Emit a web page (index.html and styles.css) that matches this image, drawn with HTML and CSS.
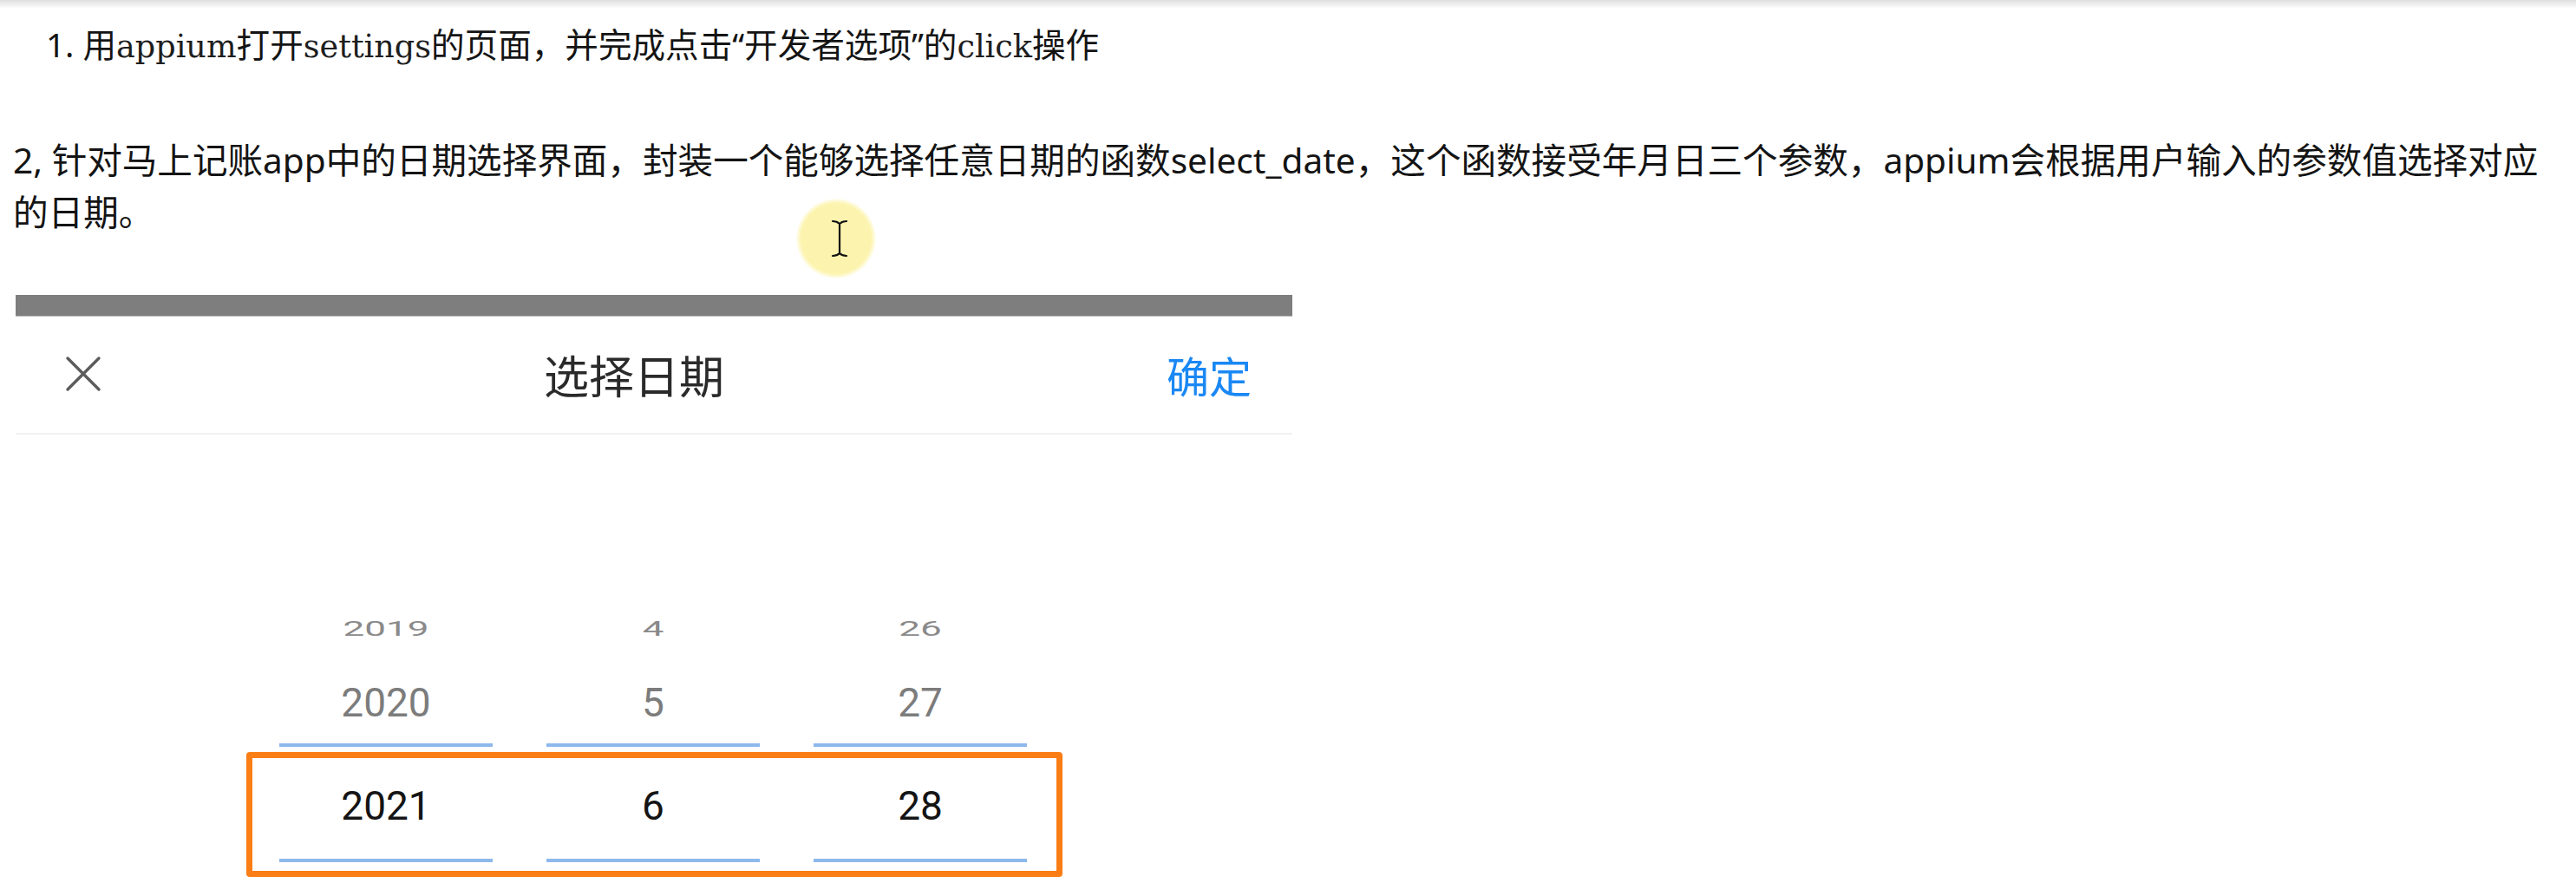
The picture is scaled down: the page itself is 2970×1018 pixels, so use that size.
FILE: index.html
```html
<!DOCTYPE html>
<html lang="zh-CN">
<head>
<meta charset="utf-8">
<title>select_date</title>
<link rel="stylesheet" href="styles.css">
</head>
<body>
<div class="shade"></div>
<main class="doc">
  <p class="q1">1. 用<span class="lat">appium</span>打开<span class="lat">settings</span>的页面，并完成点击“开发者选项”的<span class="lat">click</span>操作</p>
  <p class="q2">2, 针对马上记账app中的日期选择界面，封装一个能够选择任意日期的函数select_date，这个函数接受年月日三个参数，appium会根据用户输入的参数值选择对应的日期。</p>
  <section class="shot">
    <div class="statusbar"></div>
    <div class="head">
      <span class="close"><svg viewBox="0 0 42 42" width="42" height="42"><path d="M3 3 L39 39 M39 3 L3 39" stroke="#5c5c5c" stroke-width="3.4" fill="none" stroke-linecap="round"/></svg></span>
      <span class="title">选择日期</span>
      <span class="ok">确定</span>
    </div>
    <div class="wheel">
      <div class="col">
        <div class="cell far">2019</div>
        <div class="cell near">2020</div>
        <div class="cell sel">2021</div>
      </div>
      <div class="col">
        <div class="cell far">4</div>
        <div class="cell near">5</div>
        <div class="cell sel">6</div>
      </div>
      <div class="col">
        <div class="cell far">26</div>
        <div class="cell near">27</div>
        <div class="cell sel">28</div>
      </div>
      <div class="mark"></div>
    </div>
  </section>
  <div class="cursor"><svg viewBox="0 0 22 44" width="22" height="44"><path d="M3 2 Q8 2 11 5 Q14 2 19 2 M11 5 V39 M3 42 Q8 42 11 39 Q14 42 19 42" stroke="#111" stroke-width="2.2" fill="none" stroke-linecap="round"/></svg></div>
</main>
</body>
</html>
```

FILE: styles.css
```css
* { box-sizing: border-box; margin: 0; padding: 0; }
html, body { background: #fff; }
body {
  font-family: "Noto Sans", "Noto Sans CJK SC", sans-serif;
  color: #222;
  width: 2970px;
  height: 1018px;
  overflow: hidden;
}
.shade { height: 10px; background: linear-gradient(#dedede, #ffffff); }
.doc { position: relative; }
.q1 {
  margin-top: 11px;
  padding-left: 53px;
  font-size: 38.6px;
  line-height: 60px;
  color: #141414;
}
.q1 .lat { font-family: "DejaVu Serif", serif; font-size: 36.6px; color: #1e1e1e; }
.q2 {
  margin-top: 71px;
  padding-left: 15px;
  width: 2940px;
  font-size: 40.6px;
  line-height: 60px;
  color: #141414;
}
.shot {
  margin-top: 65px;
  margin-left: 18px;
  width: 1472px;
}
.statusbar {
  height: 25px;
  background: #7e7e7e;
  border-bottom: 1px solid #b8b8b8;
}
.head {
  display: flex;
  align-items: center;
  height: 136px;
  padding-bottom: 2px;
  border-bottom: 2px solid #f1f1f1;
}
.close { padding-left: 57px; display: flex; }
.title {
  flex: 1;
  text-align: center;
  font-size: 52px;
  color: #2a2a2a;
}
.ok {
  padding-right: 47px;
  font-size: 49px;
  color: #1a88f4;
}
.wheel {
  position: relative;
  display: grid;
  grid-template-columns: repeat(3, 246px);
  column-gap: 62px;
  padding-left: 304px;
  padding-top: 204px;
  height: 520px;
}
.col { display: flex; flex-direction: column; }
.cell {
  text-align: center;
  font-family: Roboto, "Noto Sans", sans-serif;
}
.far {
  height: 40px;
  line-height: 40px;
  font-size: 44px;
  color: #8a8a8a;
  transform: scaleY(0.55);
}
.near {
  padding: 42px 0 24px;
  line-height: 46px;
  font-size: 46px;
  color: #7c7c7c;
  border-bottom: 4px solid #8db8ec;
}
.sel {
  padding: 45px 0 38px;
  line-height: 46px;
  font-size: 46px;
  color: #141414;
  border-bottom: 4px solid #8db8ec;
}
.mark {
  position: absolute;
  left: 266px;
  top: 366px;
  width: 941px;
  height: 144px;
  border: 7px solid #fa7d15;
  border-radius: 4px;
}
.cursor {
  position: absolute;
  left: 918px;
  top: 208px;
  width: 92px;
  height: 92px;
  border-radius: 50%;
  background: radial-gradient(circle, #fcf4ae 0%, #fcf4ae 62%, rgba(252, 244, 174, 0) 72%);
  display: flex;
  align-items: center;
  justify-content: center;
  padding-left: 8px;
}
```
